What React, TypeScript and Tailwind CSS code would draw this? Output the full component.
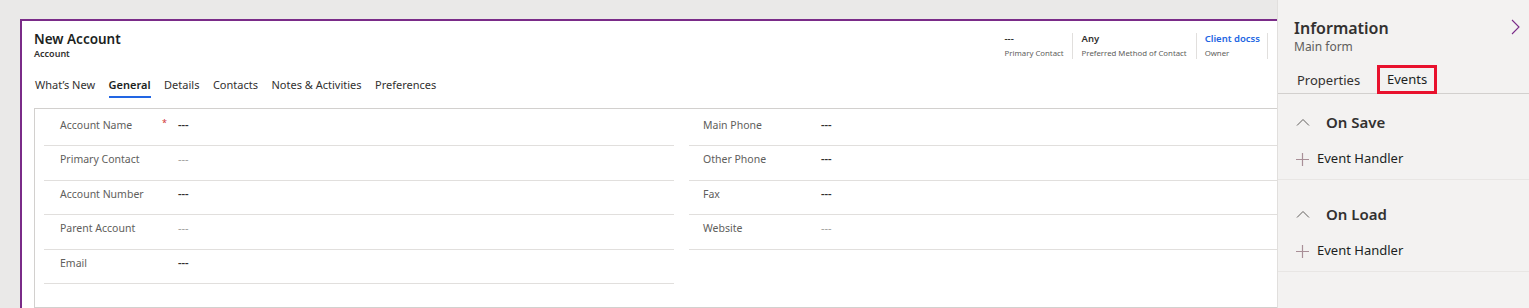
import React from 'react';

type Field = { label: string; value: string; required?: boolean; muted?: boolean };

const leftFields: Field[] = [
  { label: 'Account Name', value: '---', required: true },
  { label: 'Primary Contact', value: '---', muted: true },
  { label: 'Account Number', value: '---' },
  { label: 'Parent Account', value: '---', muted: true },
  { label: 'Email', value: '---' },
];

const rightFields: Field[] = [
  { label: 'Main Phone', value: '---' },
  { label: 'Other Phone', value: '---' },
  { label: 'Fax', value: '---' },
  { label: 'Website', value: '---', muted: true },
];

const rowHeights = ['h-[34px]', 'h-[35px]', 'h-[34px]', 'h-[35px]', 'h-[34px]'];

const tabs = ['What\u2019s New', 'General', 'Details', 'Contacts', 'Notes & Activities', 'Preferences'];

const FieldRow: React.FC<{ field: Field; idx: number; inset: string }> = ({ field, idx, inset }) => (
  <div className={`flex items-start pt-[5px] border-b border-[#e1dfdd] ${rowHeights[idx]}`}>
    <div className={`relative ${inset} text-[10.5px] leading-4 text-[#605e5c]`}>
      {field.label}
      {field.required && (
        <span className="absolute left-[118px] top-[-2px] text-[9px] text-[#d13438]">*</span>
      )}
    </div>
    <div
      className={`text-[11px] leading-4 ${field.muted ? 'text-[#a19f9d]' : 'text-[#323130] font-semibold'}`}
    >
      {field.value}
    </div>
  </div>
);

const ChevronUp = () => (
  <svg width="14" height="8" viewBox="0 0 14 8" fill="none">
    <path d="M1 7.5 L7 1.5 L13 7.5" stroke="#605e5c" strokeWidth="1" />
  </svg>
);

const Plus = () => (
  <svg width="13" height="13" viewBox="0 0 13 13" fill="none">
    <path d="M6.5 0 V13 M0 6.5 H13" stroke="#a88f97" strokeWidth="1.2" />
  </svg>
);

const EventSection: React.FC<{ title: string; top: string }> = ({ title, top }) => (
  <div className={`border-b border-[#e8e6e4] ${top} pb-[7px]`}>
    <div className="flex items-center h-[26px] pl-[18px]">
      <ChevronUp />
      <span className="ml-[16px] text-[15px] font-semibold text-[#323130]">{title}</span>
    </div>
    <div className="flex items-center h-[26px] mt-[11px] pl-[18px]">
      <Plus />
      <span className="ml-[8px] text-[13px] text-[#201f1e]">Event Handler</span>
    </div>
  </div>
);

export default function App() {
  return (
    <div className="flex w-[1529px] h-[308px] overflow-hidden bg-[#eae9e8] font-['Noto_Sans',sans-serif] text-[#323130]">
      {/* canvas */}
      <div className="flex-1 flex flex-col min-w-0">
        <div className="h-[2px] flex">
          <div className="w-[105px] bg-[#f6f6f6]" />
          <div className="flex-1 bg-[#eeedec]" />
        </div>
        <div className="flex-1 pl-5 pt-[19px]">
          <div className="h-full bg-white border-l-2 border-t-2 border-[#7a2b88] pl-3">
            {/* header */}
            <div className="flex items-start justify-between pt-[8px] pr-[9px]">
              <div>
                <div className="text-[13.5px] font-semibold leading-5 text-[#201f1e]">New Account</div>
                <div className="text-[9px] font-semibold leading-3 text-[#323130] -mt-[1px]">Account</div>
              </div>
              <div className="flex items-stretch mt-[4px]">
                <div className="px-2 border-r border-[#e1dfdd] h-[26px]">
                  <div className="text-[9.5px] font-semibold leading-3 text-[#323130]">---</div>
                  <div className="text-[7.8px] leading-3 text-[#605e5c] mt-[2px]">Primary Contact</div>
                </div>
                <div className="px-[9px] border-r border-[#e1dfdd] h-[26px]">
                  <div className="text-[9.5px] font-semibold leading-3 text-[#323130]">Any</div>
                  <div className="text-[7.8px] leading-3 text-[#605e5c] mt-[2px]">Preferred Method of Contact</div>
                </div>
                <div className="pl-[8px] pr-[7px] border-r border-[#e1dfdd] h-[26px]">
                  <div className="text-[9.5px] font-semibold leading-3 text-[#2266e3]">Client docss</div>
                  <div className="text-[7.8px] leading-3 text-[#605e5c] mt-[2px]">Owner</div>
                </div>
              </div>
            </div>

            {/* tabs */}
            <div className="flex gap-[13.5px] mt-[17px] pl-[1px] h-[22px]">
              {tabs.map((t) => (
                <div key={t} className="relative text-[11px] leading-4 text-[#323130]">
                  <span className={t === 'General' ? 'font-semibold text-[#201f1e]' : ''}>{t}</span>
                  {t === 'General' && (
                    <div className="absolute left-0 right-0 top-[19px] h-[2px] bg-[#2266e3]" />
                  )}
                </div>
              ))}
            </div>

            {/* section */}
            <div className="mt-[9px] border border-[#d2d0ce] border-r-0 pl-[9px] pt-[3px] h-[200px] flex">
              <div className="w-[630px]">
                {leftFields.map((f, i) => (
                  <FieldRow key={f.label} field={f} idx={i} inset="pl-[16px] w-[134px] shrink-0" />
                ))}
              </div>
              <div className="flex-1 ml-[15px]">
                {rightFields.map((f, i) => (
                  <FieldRow key={f.label} field={f} idx={i} inset="pl-[14px] w-[132px] shrink-0" />
                ))}
              </div>
            </div>
          </div>
        </div>
      </div>

      {/* right panel */}
      <aside className="w-[252px] shrink-0 bg-[#f3f2f1] border-l border-[#e1dfdd] flex flex-col">
        <div className="flex items-start justify-between pl-[16px] pr-[9px] pt-[18px]">
          <div>
            <div className="text-[16px] font-semibold leading-5 text-[#323130]">Information</div>
            <div className="text-[12px] leading-4 text-[#605e5c] mt-[1px]">Main form</div>
          </div>
          <svg width="9" height="16" viewBox="0 0 9 16" fill="none" className="mt-[1px]">
            <path d="M1 1 L8 8 L1 15" stroke="#7a2b88" strokeWidth="1.1" />
          </svg>
        </div>
        <div className="flex items-end mt-[10px] border-b border-[#d2d0ce] h-[29px] pl-[19px]">
          <div className="text-[13px] leading-[26px] text-[#323130] w-[80px]">Properties</div>
          <div className="border-[3px] border-[#e8112d] px-[7px] h-[29px] -mb-[1px] flex items-center text-[13px] text-[#201f1e]">
            Events
          </div>
        </div>
        <EventSection title="On Save" top="pt-[15px]" />
        <EventSection title="On Load" top="pt-[21px]" />
      </aside>
    </div>
  );
}
